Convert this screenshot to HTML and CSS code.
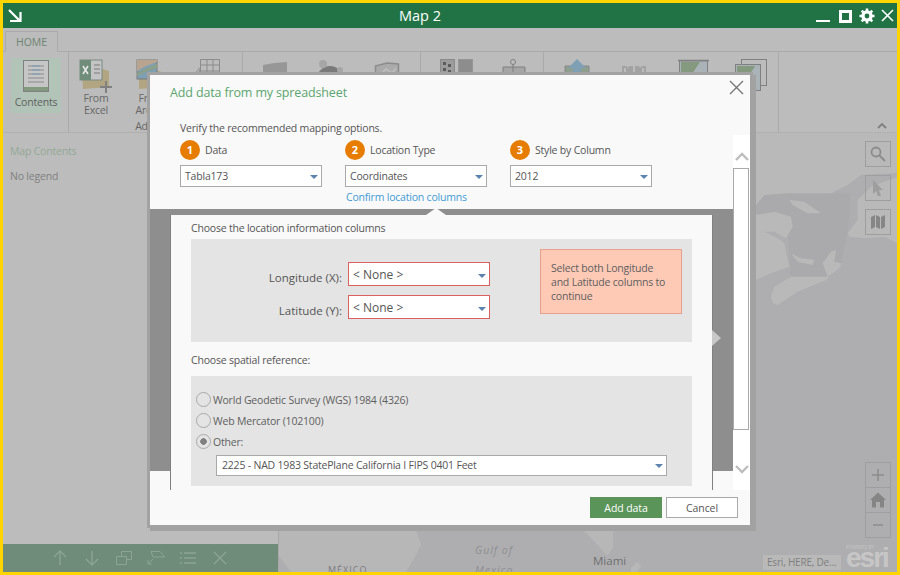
FILE: index.html
```html
<!DOCTYPE html>
<html lang="en">
<head>
<meta charset="utf-8">
<title>Map 2</title>
<link rel="stylesheet" href="styles.css">
</head>
<body>
<div class="frame">
  <header class="titlebar">
    <svg class="tb-arrow" width="14" height="14" viewBox="0 0 14 14"><path d="M1 1 L12 12 M2 12 H12.500 V3" fill="none" stroke="#fff" stroke-width="2.200"/></svg>
    <div class="tb-title">Map 2</div>
    <div class="tb-controls">
      <svg class="tb-min" width="15" height="14" viewBox="0 0 15 14"><rect x="0" y="11" width="14" height="2" fill="#fff"/></svg>
      <svg class="tb-max" width="14" height="14" viewBox="0 0 14 14"><rect x="1.500" y="1.500" width="10" height="10" fill="none" stroke="#fff" stroke-width="3"/></svg>
      <svg width="16" height="16" viewBox="0 0 16 16"><circle cx="8" cy="8" r="4.200" fill="none" stroke="#fff" stroke-width="3"/><path d="M8 .5V15.500M.5 8H15.500M2.700 2.700L13.300 13.300M13.300 2.700L2.700 13.300" stroke="#fff" stroke-width="2.600"/><circle cx="8" cy="8" r="2.400" fill="#217346"/></svg>
      <svg width="13" height="13" viewBox="0 0 13 13"><path d="M1 1L12 12M12 1L1 12" stroke="#fff" stroke-width="1.600"/></svg>
    </div>
  </header>

  <section class="ribbon">
    <div class="tabs"><div class="tab">HOME</div></div>
    <div class="groups">
      <div class="group group-contents">
        <div class="rb-btn rb-active">
          <svg width="26" height="32" viewBox="0 0 26 32"><rect x=".5" y=".5" width="25" height="31" fill="#c6c6c6" stroke="#808080"/><rect x="1" y="27" width="24" height="4" fill="#849a80"/><path d="M5 6H21M5 10H21M5 14H21M5 18H21M5 22H21" stroke="#8a8a8a"/><path d="M9 6H17M9 10H17M9 14H17" stroke="#7b9fb8"/></svg>
          <span>Contents</span>
        </div>
      </div>
      <div class="group group-add">
        <div class="rb-col rb-excel">
          <svg width="34" height="34" viewBox="0 0 34 34"><path d="M3 12L24 10L30 12V28L4 30Z" fill="#ad9f6e" opacity=".75"/><rect x="1" y="1" width="22" height="20" fill="#c4c4c4" stroke="#7a8a80"/><rect x="1" y="1" width="11" height="20" fill="#6f8d7a"/><path d="M4 7L9 15M9 7L4 15" stroke="#e6e6e6" stroke-width="1.600"/><path d="M15 6H21M15 10H21M15 14H21" stroke="#7a7a7a"/><path d="M27 22V34M21 28H33" stroke="#808080" stroke-width="2"/></svg>
          <span>From<br>Excel</span>
        </div>
        <div class="rb-col rb-arc">
          <svg width="30" height="34" viewBox="0 0 30 34"><path d="M3 14L22 12L30 14V28L3 30Z" fill="#ad9f6e" opacity=".75"/><rect x="1" y="1" width="20" height="19" fill="#7f9fb3" stroke="#7a7a7a"/><path d="M1 12L10 7L21 3V1H1Z" fill="#b9a58f"/><path d="M1 14L11 9L21 5V9L10 13L1 17Z" fill="#8aa08a"/></svg>
          <span>From<br>ArcGIS</span>
        </div>
        <div class="rb-col rb-table">
          <svg width="26" height="26" viewBox="0 0 26 26"><path d="M6.500.5H25.500V18H6.500ZM6.500 6H25.500M6.500 12H25.500M13 .5V18M19 .5V18" fill="none" stroke="#8c8c8c"/><path d="M1 16A5 5 0 0 1 6 11M4 9L7 11L4 14" fill="none" stroke="#8c8c8c"/></svg>
        </div>
        <div class="grp-label">Add Data</div>
      </div>
      <div class="group group-three">
        <svg width="26" height="24" viewBox="0 0 26 24"><path d="M1 6L12 4L25 3V24H1Z" fill="#979797"/></svg>
        <svg width="30" height="24" viewBox="0 0 30 24"><circle cx="14" cy="20" r="13" fill="#7a7a7a"/><circle cx="7" cy="5" r="4" fill="#a6a6a6"/><circle cx="24" cy="11" r="3" fill="#a6a6a6"/></svg>
        <svg width="26" height="24" viewBox="0 0 26 24"><path d="M1.500 7L13 4L24.500 5V24H1.500Z" fill="#aaa" stroke="#8c8c8c" stroke-width="1.500"/><path d="M6 16L12 10L18 14L22 9" fill="none" stroke="#bcbcbc" stroke-width="2"/></svg>
      </div>
      <div class="group group-two">
        <svg width="33" height="24" viewBox="0 0 33 24"><rect x=".5" y=".5" width="14" height="20" fill="#9c9c9c" stroke="#8a8a8a"/><rect x="18.500" y=".5" width="14" height="20" fill="#8d8d8d" stroke="#969696"/><path d="M3 3H6V6H3ZM8 5H11V8H8ZM3 9H6V12H3ZM8 11H11V14H8ZM4 15H7V18H4Z" fill="#5c5c5c"/></svg>
        <svg width="26" height="24" viewBox="0 0 26 24"><path d="M2 8H24V24H2Z" fill="#a6a6a6" stroke="#7f7f7f"/><circle cx="12" cy="3" r="2.500" fill="none" stroke="#7f7f7f"/><path d="M12 5V20" stroke="#7f7f7f"/></svg>
      </div>
      <div class="group group-four">
        <svg width="26" height="24" viewBox="0 0 26 24"><path d="M1 7H25V24H1Z" fill="#8f9f8f" stroke="#888"/><path d="M13 0L22 9H17V24H9V9H4Z" fill="#7f9fb5"/></svg>
        <svg width="26" height="24" viewBox="0 0 26 24"><path d="M1 7H25V24H1Z" fill="#a2a2a2"/><path d="M13 1L20 8M13 1L6 8M13 1V20M4 9V18M22 9V18" stroke="#bcbcbc" stroke-width="2" fill="none"/></svg>
        <svg class="ic-board" width="31" height="24" viewBox="0 0 31 24"><path d="M0 1.500H31" stroke="#808080" stroke-width="1.500"/><rect x="1.500" y="2" width="28" height="22" fill="#aab3b8" stroke="#808080"/><path d="M3 3H22L12 18L3 14Z" fill="#85997f"/></svg>
        <svg class="ic-stack" width="33" height="42" viewBox="0 0 33 42"><rect x="6.500" y=".5" width="25" height="26" fill="#bcbcbc" stroke="#808080"/><rect x=".5" y="5.500" width="25" height="26" fill="#aab3b8" stroke="#808080"/><path d="M2 7H20L12 20L2 18Z" fill="#85997f"/></svg>
      </div>
      <div class="group group-end"><svg class="collapse" width="10" height="6" viewBox="0 0 10 6"><path d="M1 5L5 1L9 5" fill="none" stroke="#808080" stroke-width="1.800"/></svg></div>
    </div>
  </section>

  <main class="workspace">
    <aside class="sidebar">
      <div class="side-body">
        <div class="side-title">Map Contents</div>
        <div class="side-note">No legend</div>
      </div>
      <div class="side-tools">
        <svg width="14" height="16" viewBox="0 0 14 16"><path d="M7 15V1M1 7L7 1L13 7" fill="none" stroke="#8ba494" stroke-width="1.400"/></svg>
        <svg width="14" height="16" viewBox="0 0 14 16"><path d="M7 1V15M1 9L7 15L13 9" fill="none" stroke="#8ba494" stroke-width="1.400"/></svg>
        <svg width="16" height="14" viewBox="0 0 16 14"><path d="M.5 5.500H10.500V13.500H.5ZM5.500 5.500V.5H15.500V8.500H10.500" fill="none" stroke="#8ba494"/></svg>
        <svg width="18" height="14" viewBox="0 0 18 14"><path d="M4 .5H13L17.500 6H6L4 .5ZM1 13L6 8M1 9V13H5" fill="none" stroke="#8ba494"/></svg>
        <svg width="16" height="14" viewBox="0 0 16 14"><path d="M0 2H2M4 2H16M0 7H2M4 7H16M0 12H2M4 12H16" stroke="#8ba494" stroke-width="1.400"/></svg>
        <svg width="14" height="14" viewBox="0 0 14 14"><path d="M1 1L13 13M13 1L1 13" stroke="#8ba494" stroke-width="1.300"/></svg>
      </div>
    </aside>
    <div class="map">
      <svg class="map-land" width="619" height="439" viewBox="278 133 619 439">
        <g transform="translate(750 130) scale(.3333)" fill="#b9b9ba">
          <path d="M15 190H300L290 310L270 400L230 440L120 440L110 300L15 250Z" fill="#aaaaac"/>
          <path d="M15 225L40 195L110 190L240 190L290 165L330 135L440 128V0H15Z"/>
          <path d="M295 320L290 310L320 270L320 210L360 170L440 140V340L400 320L340 325Z"/>
          <path d="M115 210L160 215L210 250L170 250L125 225Z"/>
          <path d="M15 255L70 245L120 260L125 290L105 325L70 305L40 305L80 325L100 340L110 390L115 410L60 430L15 450Z"/>
          <path d="M120 370L150 385L190 390L185 405L140 395Z"/>
          <path d="M215 400L240 365L255 360L250 395L270 400L265 415L230 440Z"/>
          <path d="M60 500L70 470L120 440L180 440L235 440L225 450L140 485L80 525L65 520Z"/>
        </g>
        <path d="M290 572L278 556V530H415L420 545L412 560L405 572Z" fill="#b7b7b8"/>
        <path d="M582 530H612L612 548L606 556L592 540Z" fill="#b7b7b8"/>
        <path d="M630 568L636 562L640 566L636 572H630Z" fill="#b7b7b8"/>
      </svg>
      <div class="map-tools">
        <div class="tool-group">
          <button class="tool"><svg width="16" height="16" viewBox="0 0 16 16"><circle cx="6" cy="6" r="4.500" fill="none" stroke="#8c8c8c" stroke-width="1.800"/><path d="M9.500 9.500L15 15" stroke="#8c8c8c" stroke-width="2"/></svg></button>
          <button class="tool"><svg width="12" height="18" viewBox="0 0 12 18"><path d="M1 1L11 11H7L9 17L6 17L4 12L1 15Z" fill="#9e9e9e"/></svg></button>
          <button class="tool"><svg width="16" height="16" viewBox="0 0 16 16"><path d="M1 3L5 1V13L1 15ZM6 1L10 3V15L6 13ZM11 3L15 1V13L11 15Z" fill="#868686"/></svg></button>
        </div>
        <div class="zoom-group">
          <button class="tool zoom"><svg width="14" height="14" viewBox="0 0 14 14"><path d="M7 1V13M1 7H13" stroke="#8c8c8c" stroke-width="1.500"/></svg></button>
          <button class="tool zoom"><svg width="16" height="16" viewBox="0 0 16 16"><path d="M8 .5L16 8H14V15.500H10V10H6V15.500H2V8H0Z" fill="#858585"/></svg></button>
          <button class="tool zoom"><svg width="12" height="4" viewBox="0 0 12 4"><path d="M1 2H11" stroke="#8c8c8c" stroke-width="1.500"/></svg></button>
        </div>
      </div>
      <div class="map-footer">
        <div class="label-row">
          <span class="lbl-mexico">MÉXICO</span>
          <span class="lbl-gulf">Gulf of<br>Mexico</span>
          <span class="lbl-miami">Miami</span>
        </div>
        <div class="attr">Esri, HERE, De...</div>
        <div class="esri"><span class="pw">POWERED BY</span><span class="wm">esri</span></div>
      </div>
    </div>
  </main>

  <div class="dialog">
    <div class="dlg-head">
      <h1>Add data from my spreadsheet</h1>
      <svg class="dlg-x" width="15" height="15" viewBox="0 0 15 15"><path d="M1 1L14 14M14 1L1 14" stroke="#777" stroke-width="1.400"/></svg>
      <p>Verify the recommended mapping options.</p>
    </div>
    <div class="dlg-body">
      <div class="dlg-left">
        <div class="steps">
          <div class="step">
            <div class="step-h"><span class="num">1</span>Data</div>
            <div class="sel">Tabla173<i class="caret"></i></div>
          </div>
          <div class="step">
            <div class="step-h"><span class="num">2</span>Location Type</div>
            <div class="sel">Coordinates<i class="caret"></i></div>
            <a class="confirm">Confirm location columns</a>
          </div>
          <div class="step">
            <div class="step-h"><span class="num">3</span>Style by Column</div>
            <div class="sel">2012<i class="caret"></i></div>
          </div>
        </div>
        <div class="viewport">
          <div class="panel">
            <i class="notch"></i>
            <i class="next"></i>
            <div class="sec-title">Choose the location information columns</div>
            <div class="box box-loc">
              <div class="fields">
                <div class="field"><label>Longitude (X):</label><div class="sel sel-err">&lt; None &gt;<i class="caret"></i></div></div>
                <div class="field"><label>Latitude (Y):</label><div class="sel sel-err">&lt; None &gt;<i class="caret"></i></div></div>
              </div>
              <div class="note">Select both Longitude and Latitude columns to continue</div>
            </div>
            <div class="sec-title sec-spatial">Choose spatial reference:</div>
            <div class="box box-ref">
              <div class="radio"><i class="dot"></i>World Geodetic Survey (WGS) 1984 (4326)</div>
              <div class="radio"><i class="dot"></i>Web Mercator (102100)</div>
              <div class="radio"><i class="dot on"></i>Other:</div>
              <div class="sel sel-ref">2225 - NAD 1983 StatePlane California I FIPS 0401 Feet<i class="caret"></i></div>
            </div>
          </div>
        </div>
      </div>
      <div class="scroll">
        <svg class="chev" width="14" height="9" viewBox="0 0 14 9"><path d="M1 8L7 2L13 8" fill="none" stroke="#bdbdbd" stroke-width="2.400"/></svg>
        <div class="thumb"></div>
        <svg class="chev" width="14" height="9" viewBox="0 0 14 9"><path d="M1 1L7 7L13 1" fill="none" stroke="#bdbdbd" stroke-width="2.400"/></svg>
      </div>
    </div>
    <div class="dlg-foot">
      <button class="btn btn-ok">Add data</button>
      <button class="btn">Cancel</button>
    </div>
  </div>
</div>
</body>
</html>
```
FILE: styles.css
```css
* { box-sizing: border-box; }
html, body { margin: 0; height: 100%; overflow: hidden; }
body { font-family: "Open Sans", "Noto Sans", sans-serif; font-size: 10.5px; letter-spacing: -.2px; color: #555; }
i { display: block; font-style: normal; }
svg { display: block; flex: none; }

.frame { position: relative; width: 900px; height: 575px; border: 3px solid #ffd400; display: flex; flex-direction: column; background: #bcbcbc; overflow: hidden; }

.titlebar { height: 25px; flex: none; background: #217346; color: #fff; display: flex; align-items: center; padding: 0 3px 0 5px; }
.tb-title { flex: 1; text-align: center; font-size: 14.5px; letter-spacing: 0; margin-right: -2px; }
.tb-controls { display: flex; align-items: center; gap: 6px; }
.tb-min { margin-right: 2px; }
.tb-max { margin-top: 2px; }
.tb-arrow { margin-top: 1px; }

.ribbon { height: 105px; flex: none; border-bottom: 1px solid #b0b0b0; background: #bcbcbc; display: flex; flex-direction: column; }
.tabs { height: 24px; flex: none; padding: 3px 0 0 2px; border-bottom: 1px solid #aaa; }
.tab { width: 53px; height: 21px; border: 1px solid #aaa; border-bottom-color: #bcbcbc; text-align: center; line-height: 20px; color: #6d8472; letter-spacing: 0; }
.groups { flex: 1; display: flex; }
.group { position: relative; border-right: 1px solid #aaa; height: 80px; }
.group-contents { width: 66px; padding: 6px 0 0 8px; }
.rb-btn { width: 50px; height: 55px; background: #b1c4b7; display: flex; flex-direction: column; align-items: center; padding-top: 2px; gap: 3px; color: #5f5f5f; }
.group-add { width: 174px; display: flex; padding-top: 7px; color: #666; }
.rb-col { text-align: center; line-height: 12px; display: flex; flex-direction: column; align-items: center; }
.rb-col svg { margin-bottom: -1px; }
.rb-excel { width: 46px; margin-left: 4px; }
.rb-arc { width: 40px; margin-left: 12px; }
.rb-table { width: 30px; margin-left: 21px; }
.grp-label { position: absolute; bottom: -1px; left: 43px; width: 90px; text-align: center; }
.group-three { width: 178px; display: flex; gap: 28px; padding: 7px 0 0 19px; }
.group-two { width: 123px; display: flex; gap: 28px; padding: 7px 0 0 19px; }
.group-four { width: 235px; display: flex; gap: 31px; padding: 7px 0 0 20px; }
.ic-stack { margin-left: -5px; }
.group-end { flex: 1; border-right: 0; display: flex; justify-content: flex-end; align-items: flex-end; padding: 0 10px 3px 0; }

.workspace { flex: 1; display: flex; min-height: 0; }
.sidebar { width: 276px; flex: none; border-right: 1px solid #a8a8a8; display: flex; flex-direction: column; }
.side-body { flex: 1; padding: 11px 7px; }
.side-title { color: #93a897; line-height: 14px; }
.side-note { color: #808080; line-height: 14px; margin-top: 11px; }
.side-tools { height: 28px; flex: none; background: #6f8c7b; display: grid; grid-template-columns: repeat(6, 32px); justify-items: center; align-items: center; padding-left: 41px; }

.map { flex: 1; position: relative; background: #aeaeb0; display: flex; justify-content: flex-end; padding: 8px 6px 2px 0; overflow: hidden; }
.map-land { position: absolute; left: 0; top: 0; }
.map-tools { position: relative; display: flex; flex-direction: column; justify-content: space-between; height: 397px; }
.tool-group { display: flex; flex-direction: column; gap: 8px; }
.tool { width: 26px; height: 26px; padding: 0; border: 1px solid #9e9e9e; background: transparent; display: flex; align-items: center; justify-content: center; }
.zoom-group { display: flex; flex-direction: column; }
.zoom { height: 26px; margin-top: -1px; width: 26px; }
.map-footer { position: absolute; left: 0; right: 0; bottom: 0; height: 32px; }
.label-row span { position: absolute; color: #7c7c7e; letter-spacing: 0; }
.label-row .lbl-mexico { left: 49px; bottom: -4px; font-size: 9px; letter-spacing: 1px; }
.label-row .lbl-gulf { left: 196px; bottom: -8px; font-style: italic; letter-spacing: 1px; line-height: 20px; color: #8f8f91; }
.label-row .lbl-miami { left: 314px; bottom: 4px; font-size: 11.500px; color: #707072; }
.attr { position: absolute; right: 56px; bottom: 2px; width: 78px; height: 15px; background: #b9b9b9; color: #7f7f7f; font-size: 10px; line-height: 15px; padding-left: 4px; white-space: nowrap; }
.esri { position: absolute; right: 8px; bottom: 6px; width: 43px; color: #c6c6c6; }
.pw { display: block; font-size: 4.500px; line-height: 6px; letter-spacing: 0; white-space: nowrap; }
.wm { display: block; font-size: 28px; line-height: 16px; font-weight: 700; letter-spacing: -2px; font-family: "Liberation Sans", sans-serif; }

.dialog { position: absolute; left: 147px; top: 72px; width: 600px; height: 450px; background: #f9f9f9; box-shadow: 0 0 0 3px #a2a2a2, 3px 3px 0 3px #a2a2a2; display: flex; flex-direction: column; }
.dlg-head { position: relative; height: 60px; flex: none; padding: 9px 30px 0 20px; }
.dlg-head h1 { margin: 0; font-size: 12.500px; font-weight: 400; letter-spacing: -.14px; line-height: 18px; color: #5ba56f; }
.dlg-head p { margin: 19px 0 0 10px; line-height: 14px; color: #555; }
.dlg-x { position: absolute; right: 6px; top: 5px; }
.dlg-body { height: 355px; flex: none; display: flex; }
.dlg-left { width: 583px; flex: none; display: flex; flex-direction: column; }
.steps { height: 74px; flex: none; padding: 5px 0 0 30px; display: flex; gap: 23px; }
.step { width: 142px; }
.step-h { display: flex; align-items: center; gap: 5px; height: 20px; margin-bottom: 5px; color: #555; }
.num { width: 20px; height: 20px; border-radius: 50%; background: #e67c00; color: #fff; text-align: center; line-height: 20px; font-size: 11px; font-weight: 700; letter-spacing: 0; }
.sel { position: relative; height: 22px; background: #fff; border: 1px solid #a9a9a9; line-height: 20px; padding-left: 4px; color: #555; white-space: nowrap; }
.caret { position: absolute; right: 3px; top: 9px; width: 0; height: 0; border: 4px solid transparent; border-top: 4px solid #5b83ad; border-bottom: 0; }
.confirm { display: block; margin-top: 3px; color: #3f9bd6; line-height: 14px; padding-left: 1px; white-space: nowrap; }
.viewport { height: 281px; flex: none; overflow: hidden; background: linear-gradient(#8e8e8e 262px, #f9f9f9 262px); padding: 6px 20px 0 20px; }
.panel { position: relative; height: 290px; background: #f9f9f9; border: 1px solid #808080; border-width: 0 1px; padding: 6px 20px 0 20px; }
.notch { position: absolute; left: 255px; top: -7px; width: 0; height: 0; border: 10px solid transparent; border-bottom: 7px solid #f9f9f9; border-top: 0; }
.next { position: absolute; left: 100%; top: 115px; width: 0; height: 0; border: 8px solid transparent; border-left: 9px solid #c8c8c8; border-right: 0; }
.sec-title { line-height: 14px; color: #555; }
.sec-spatial { margin-top: 11px; }
.box { background: #e4e4e4; margin-top: 4px; }
.box-loc { height: 103px; width: 501px; display: flex; padding: 10px 10px 0 0; }
.fields { width: 299px; padding-top: 13px; display: flex; flex-direction: column; gap: 9px; }
.field { display: flex; gap: 6px; height: 24px; }
.field label { width: 151px; text-align: right; font-size: 11.500px; letter-spacing: 0; line-height: 32px; color: #555; }
.sel-err { width: 142px; height: 24px; border-color: #d9605f; font-size: 12px; letter-spacing: 0; line-height: 23px; padding-left: 4px; }
.sel-err .caret { top: 11px; }
.note { margin-left: 50px; width: 142px; height: 65px; background: #fec9b5; border: 1px solid #e7a08e; padding: 11px 14px 0 10px; line-height: 14px; color: #5f5f5f; }
.box-ref { height: 110px; width: 501px; margin-top: 9px; padding: 13px 25px 0 5px; }
.radio { display: flex; align-items: center; gap: 2px; height: 21px; color: #5f5f5f; }
.dot { width: 15px; height: 15px; border-radius: 50%; border: 1px solid #a9a9a9; background: #e4e4e4; }
.dot.on { background: radial-gradient(circle, #808080 0, #808080 3px, #e4e4e4 3.500px); }
.sel-ref { margin: 3px 0 0 20px; height: 21px; line-height: 19px; padding-left: 5px; }
.sel-ref .caret { top: 8px; }
.scroll { width: 17px; flex: none; background: #fff; display: flex; flex-direction: column; align-items: center; }
.chev { margin: 17px 0 7px; }
.scroll .thumb { width: 16px; height: 262px; margin-left: -1px; border: 1px solid #a9a9a9; background: #fff; }
.scroll .thumb + .chev { margin: 35px 0 0; }
.dlg-foot { flex: 1; display: flex; justify-content: flex-end; gap: 4px; padding: 7px 12px 0 0; }
.btn { width: 72px; height: 21px; padding: 0; font: inherit; letter-spacing: -.1px; color: #555; background: #fff; border: 1px solid #a9a9a9; }
.btn-ok { background: #5a9459; border-color: #5a9459; color: #fff; }
```
